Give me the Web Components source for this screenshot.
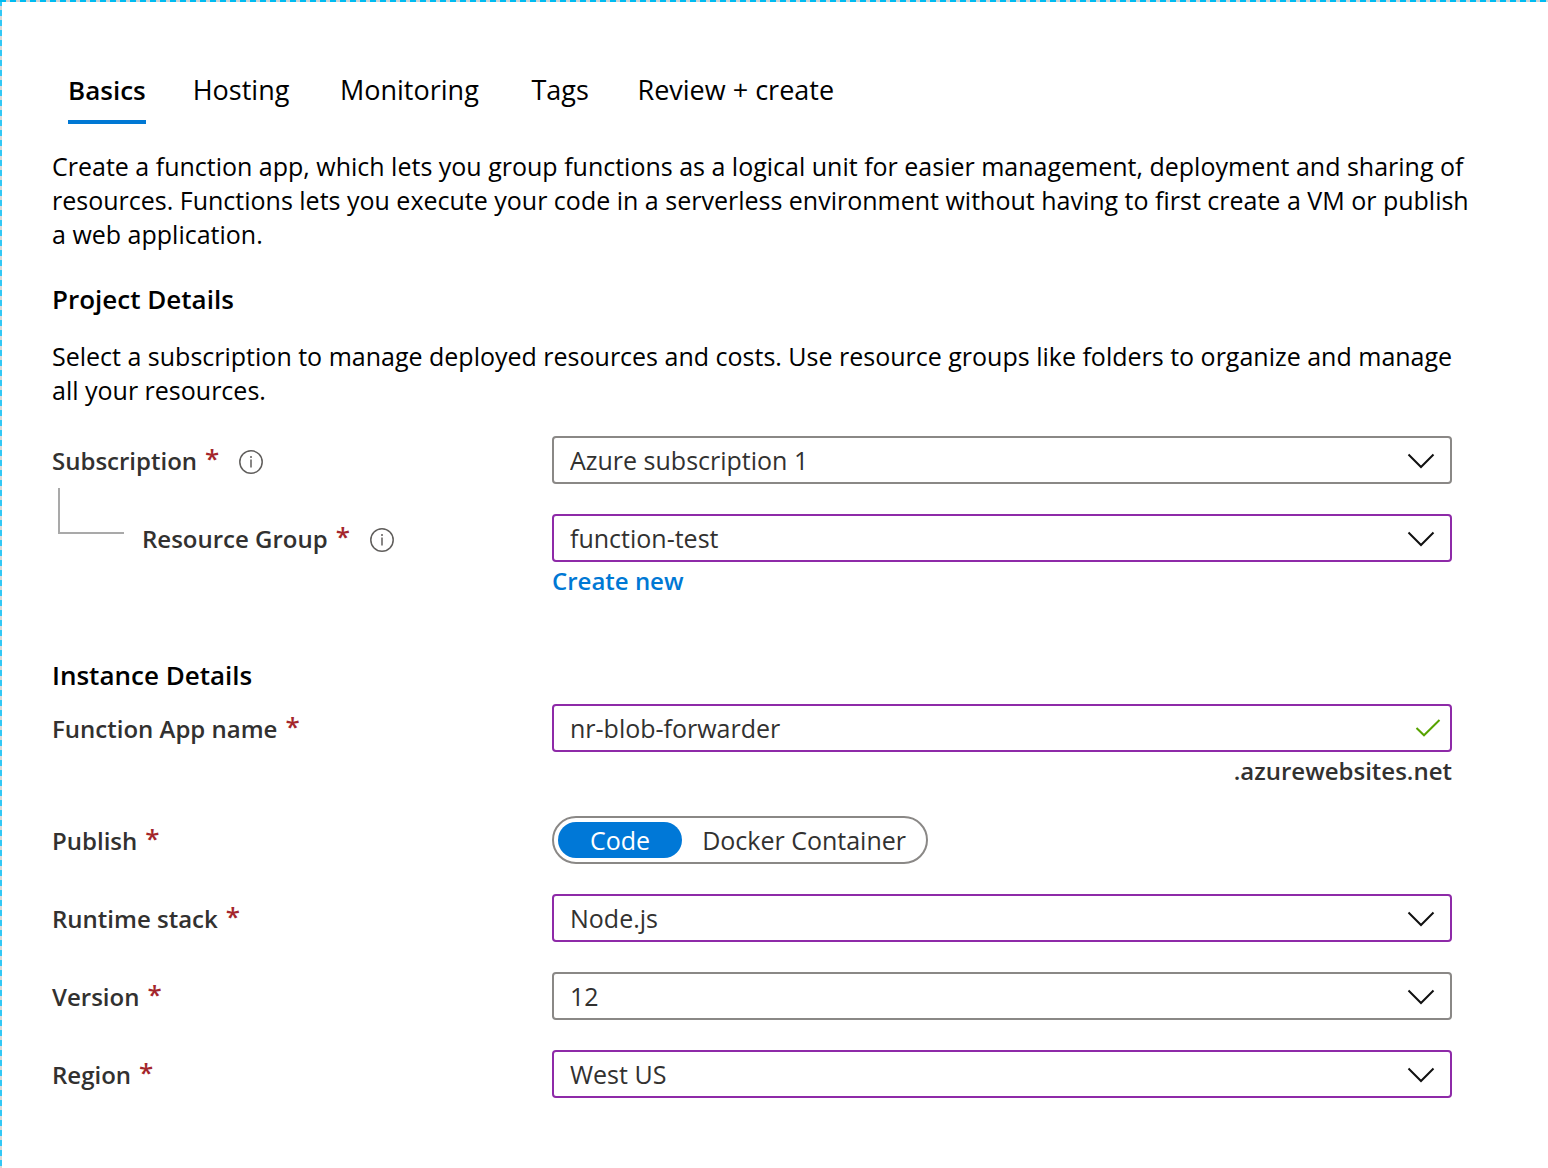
<!DOCTYPE html>
<html lang="en">
<head>
<meta charset="utf-8">
<meta name="viewport" content="width=device-width, initial-scale=1">
<title>Create Function App</title>
<style>
  body { margin: 0; background: #fff; color: #000; font-family: "Open Sans", "Noto Sans", sans-serif; font-size: 25px; line-height: 34px; }
</style>
</head>
<body>
<az-blade>
  <az-tabs>
    <az-tab selected>Basics</az-tab>
    <az-tab>Hosting</az-tab>
    <az-tab>Monitoring</az-tab>
    <az-tab>Tags</az-tab>
    <az-tab>Review + create</az-tab>
  </az-tabs>
  <az-text>Create a function app, which lets you group functions as a logical unit for easier management, deployment and sharing of resources. Functions lets you execute your code in a serverless environment without having to first create a VM or publish a web application.</az-text>
  <az-section heading="Project Details">
    <az-text slot="intro">Select a subscription to manage deployed resources and costs. Use resource groups like folders to organize and manage all your resources.</az-text>
    <az-select-field label="Subscription" info value="Azure subscription 1"></az-select-field>
    <az-select-field label="Resource Group" info nested edited value="function-test"><az-link>Create new</az-link></az-select-field>
  </az-section>
  <az-section heading="Instance Details">
    <az-text-field label="Function App name" edited value="nr-blob-forwarder" suffix=".azurewebsites.net"></az-text-field>
    <az-choice-field label="Publish" options="Code|Docker Container"></az-choice-field>
    <az-select-field label="Runtime stack" edited value="Node.js"></az-select-field>
    <az-select-field label="Version" value="12"></az-select-field>
    <az-select-field label="Region" edited value="West US"></az-select-field>
  </az-section>
</az-blade>

<script>
class AzElement extends HTMLElement {
  connectedCallback() {
    if (this.shadowRoot) return;
    this.attachShadow({ mode: 'open' }).innerHTML = `<style>*{box-sizing:border-box}${this.styles()}</style>${this.markup()}`;
  }
}

customElements.define('az-blade', class extends AzElement {
  styles() { return `
    :host { display: block; box-sizing: border-box; min-height: 100vh; padding: 70px 96px 39px 52px;
      background:
        repeating-linear-gradient(to right, #00bcf2 0 6px, #d2d2d2 6px 10px) top / 100% 2px no-repeat,
        repeating-linear-gradient(to bottom, #32c8f5 0 6px, #d8d8d8 6px 10px) left / 2px 100% no-repeat,
        #fff; }
    main { display: flex; flex-direction: column; }`; }
  markup() { return `<main><slot></slot></main>`; }
});

customElements.define('az-tabs', class extends AzElement {
  styles() { return `:host { display: block; } nav { display: flex; gap: 47px; padding: 0 16px; margin-bottom: 25px; }`; }
  markup() { return `<nav role="tablist"><slot></slot></nav>`; }
});

customElements.define('az-tab', class extends AzElement {
  styles() { return `
    :host { display: block; }
    button { display: grid; margin: 0; padding: 1px 0 11px; border: 0; border-bottom: 4px solid transparent;
      background: none; color: #000; font: inherit; font-size: 27px; line-height: 38px; text-align: left; white-space: nowrap; cursor: pointer; }
    button::after { content: attr(data-text); height: 0; overflow: hidden; visibility: hidden; font-weight: 600; }
    :host([selected]) button { font-size: 26px; font-weight: 600; border-color: #0078d4; }`; }
  markup() { return `<button type="button" role="tab" data-text="${this.textContent}" aria-selected="${this.hasAttribute('selected')}"><slot></slot></button>`; }
});

customElements.define('az-text', class extends AzElement {
  styles() { return `:host { display: block; } p { margin: 0 -22px 0 0; }`; }
  markup() { return `<p><slot></slot></p>`; }
});

customElements.define('az-link', class extends AzElement {
  styles() { return `:host { display: block; } a { color: #0078d4; font-size: 24px; font-weight: 600; text-decoration: none; }`; }
  markup() { return `<a href="#"><slot></slot></a>`; }
});

customElements.define('az-section', class extends AzElement {
  styles() { return `
    :host { display: block; padding-top: 30px; }
    h2 { margin: 0; font-size: 26px; line-height: 36px; font-weight: 600; }
    ::slotted([slot=intro]) { margin: 22px 0 29px; }
    .fields { display: flex; flex-direction: column; gap: 30px; padding-bottom: 29px; }
    .near { margin-top: 11px; }`; }
  markup() {
    const near = this.querySelector('[slot=intro]') ? '' : ' near';
    return `<h2>${this.getAttribute('heading')}</h2><slot name="intro"></slot><div class="fields${near}"><slot></slot></div>`;
  }
});

class AzField extends AzElement {
  styles() { return `
    :host { display: block; color: #323130; }
    .row { display: grid; grid-template-columns: 500px minmax(0, 1fr); align-items: start; }
    .name { display: flex; align-items: center; height: 48px; padding-top: 2px; font-size: 24px; font-weight: 600; white-space: nowrap; }
    .req { margin: 0 0 6px 8px; color: #a4262c; font-size: 26px; }
    .info { display: flex; margin: 2px 0 0 20px; padding: 0; border: 0; background: none; }
    .elbow { align-self: flex-start; width: 66px; height: 46px; margin: -28px 18px 0 6px; border: solid #a9a9a9; border-width: 0 0 2px 2px; }
    .box { display: grid; align-items: center; }
    .box > * { grid-area: 1 / 1; }
    .box svg { justify-self: end; pointer-events: none; }
    .control { width: 100%; height: 48px; margin: 0; padding: 0 60px 0 16px; border: 2px solid #8a8886; border-radius: 4px;
      background: #fff; color: #323130; font: inherit; appearance: none; outline: 0; }
    :host([edited]) .control { border-color: #8e2aa8; }
    .chevron { margin: 2px 17px 0 0; }
    .check { margin-right: 11px; }
    .suffix { margin-top: 4px; text-align: right; font-size: 24px; line-height: 30px; font-weight: 600; }
    .below { margin-top: 1px; }
    .choices { display: flex; width: fit-content; height: 48px; padding: 4px; border: 2px solid #8a8886; border-radius: 24px; }
    .choices label { display: flex; align-items: center; padding: 0 16px 0 20px; border-radius: 18px; cursor: pointer; }
    .choices label:first-child { padding: 0 32px; }
    .choices label:has(:checked) { background: #0078d7; color: #fff; }
    .choices input { appearance: none; width: 0; height: 0; margin: 0; }`; }
  name(target) {
    const text = this.getAttribute('label');
    const label = target ? `<label for="${target}">${text}</label>` : `<span id="title">${text}</span>`;
    const elbow = this.hasAttribute('nested') ? '<div class="elbow"></div>' : '';
    const info = this.hasAttribute('info') ? `<button class="info" type="button" aria-label="About ${text}">
      <svg width="24" height="24" viewBox="0 0 24 24" fill="none" stroke="#605e5c"><circle cx="12" cy="12" r="11.2" stroke-width="1.5"/><path d="M12 9.5V17.5" stroke-width="1.5"/><circle cx="12" cy="7" r="1" fill="#605e5c" stroke="none"/></svg></button>` : '';
    return `<div class="name">${elbow}${label}<span class="req">*</span>${info}</div>`;
  }
}

customElements.define('az-select-field', class extends AzField {
  markup() {
    const below = this.childElementCount ? '<div class="below"><slot></slot></div>' : '';
    return `<div class="row">${this.name('control')}<div><div class="box">
      <select id="control" class="control"><option>${this.getAttribute('value')}</option></select>
      <svg class="chevron" width="28" height="16" viewBox="0 0 28 16" fill="none" stroke="#111" stroke-width="2"><path d="M1.5 1.5 14 14 26.5 1.5"/></svg>
    </div>${below}</div></div>`;
  }
});

customElements.define('az-text-field', class extends AzField {
  markup() {
    return `<div class="row">${this.name('control')}<div><div class="box">
      <input id="control" class="control" type="text" value="${this.getAttribute('value')}">
      <svg class="check" width="26" height="18" viewBox="0 0 26 18" fill="none" stroke="#57a300" stroke-width="2"><path d="M1.5 9 9 16.3 24.5 1"/></svg>
    </div><div class="suffix">${this.getAttribute('suffix')}</div></div></div>`;
  }
});

customElements.define('az-choice-field', class extends AzField {
  markup() {
    const choices = this.getAttribute('options').split('|').map((option, i) =>
      `<label><input type="radio" name="choice"${i ? '' : ' checked'}>${option}</label>`).join('');
    return `<div class="row">${this.name()}<div><div class="choices" role="radiogroup" aria-labelledby="title">${choices}</div></div></div>`;
  }
});
</script>
</body>
</html>
